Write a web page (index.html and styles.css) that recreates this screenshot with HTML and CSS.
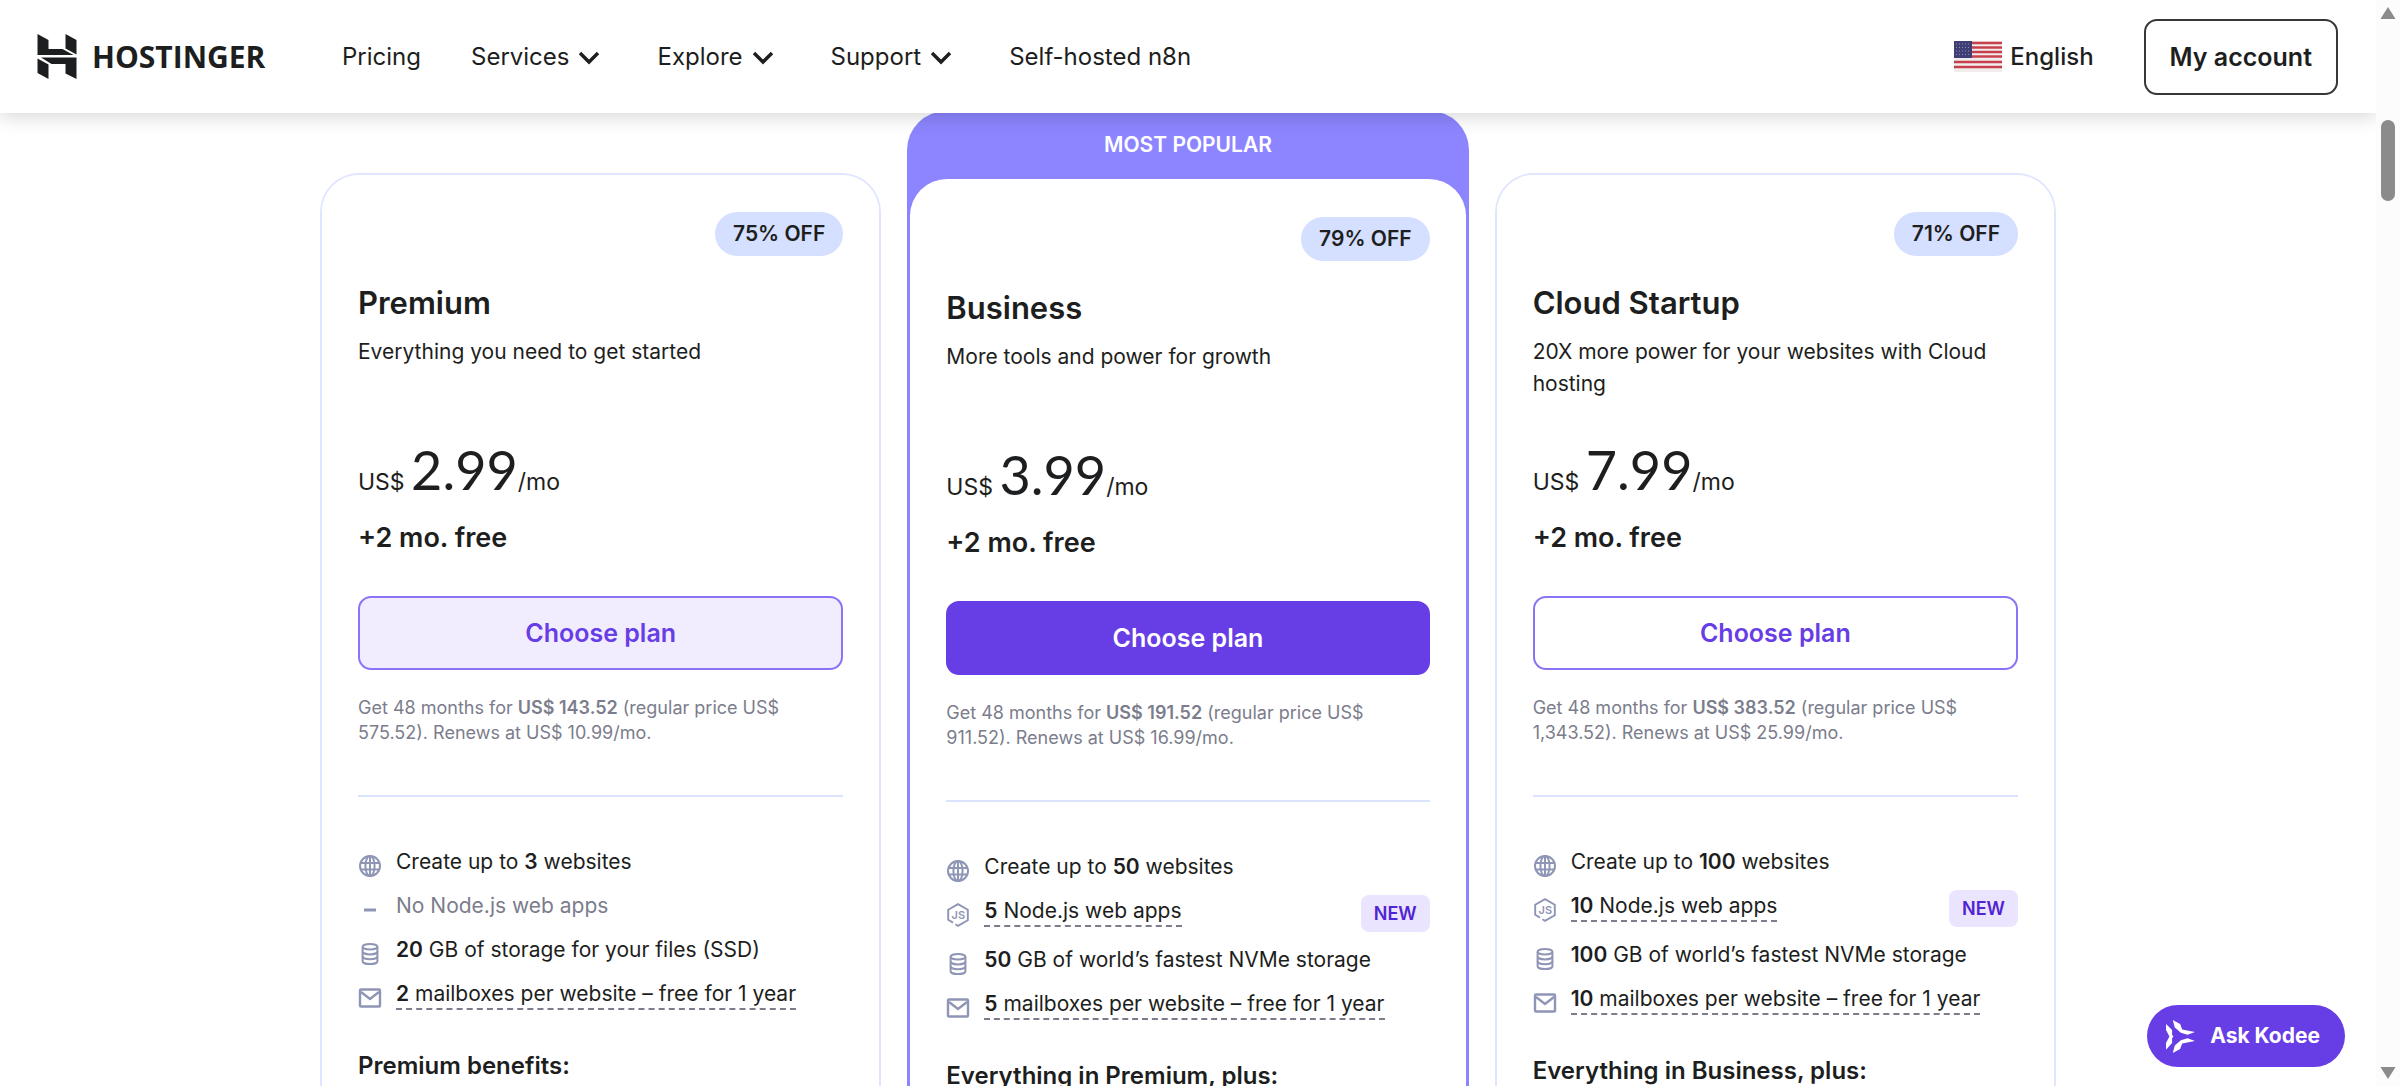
FILE: index.html
```html
<!DOCTYPE html>
<html lang="en">
<head>
  <meta charset="UTF-8">
  <meta name="viewport" content="width=device-width, initial-scale=1">
  <title>Hostinger - Choose your plan</title>
  <link rel="stylesheet" href="styles.css">
</head>
<body>
  <svg class="sprite" aria-hidden="true">
    <symbol id="chevron" viewBox="0 0 24 24">
      <path d="M3 8l9 9 9-9" fill="none" stroke="currentColor" stroke-width="3.4"/>
    </symbol>
    <symbol id="globe" viewBox="0 0 24 24">
      <g fill="none" stroke="currentColor" stroke-width="2">
        <circle cx="12" cy="12" r="10"/>
        <ellipse cx="12" cy="12" rx="4.6" ry="10"/>
        <path d="M12 2v20M2.8 9h18.400M2.8 15.500h18.400"/>
      </g>
    </symbol>
    <symbol id="node" viewBox="0 0 24 24">
      <path d="M7 19.600l-4.800-2.800V6.800L12 1.200l9.800 5.600v10.400L12 22.800l-2.600-1.500" fill="none" stroke="currentColor" stroke-width="1.9"/>
      <text x="5.500" y="16" font-size="11" font-weight="600" fill="currentColor">JS</text>
    </symbol>
    <symbol id="storage" viewBox="0 0 24 24">
      <g fill="none" stroke="currentColor" stroke-width="2">
        <ellipse cx="12" cy="4.8" rx="7.400" ry="2.8"/>
        <path d="M4.6 4.8v14.400c0 1.600 3.300 2.900 7.400 2.900s7.400-1.300 7.400-2.900V4.8"/>
        <path d="M4.6 9.500c0 1.600 3.300 2.900 7.400 2.900s7.400-1.300 7.400-2.900M4.6 14.300c0 1.600 3.300 2.900 7.400 2.900s7.400-1.300 7.400-2.900"/>
      </g>
    </symbol>
    <symbol id="mail" viewBox="0 0 24 24">
      <g fill="none" stroke="currentColor" stroke-width="2.4">
        <rect x="2" y="3.500" width="20" height="17" rx="1"/>
        <path d="M3 6l9 7 9-7"/>
      </g>
    </symbol>
    <symbol id="dash" viewBox="0 0 24 24">
      <path d="M6 12h12" stroke="currentColor" stroke-width="3"/>
    </symbol>
  </svg>

  <div class="window">
    <div class="page">
      <header class="header">
        <a class="logo" href="#">
          <svg viewBox="0 0 39 45" aria-hidden="true">
            <path d="M0 0l11 6v9h14l11 6H0zM28 0l11 6v14.500l-11-6zM3.500 23.500H39V45l-11-5.500V30H14zM0 24.500l11 6V45L0 39z"/>
          </svg>
          <span>HOSTINGER</span>
        </a>
        <nav class="nav">
          <a href="#">Pricing</a>
          <button type="button">Services<svg><use href="#chevron"/></svg></button>
          <button type="button">Explore<svg><use href="#chevron"/></svg></button>
          <button type="button">Support<svg><use href="#chevron"/></svg></button>
          <a href="#">Self-hosted n8n</a>
        </nav>
        <button type="button" class="language">
          <svg class="flag" viewBox="0 0 48 31" aria-hidden="true">
            <rect width="48" height="31" rx="1" fill="#f1eded"/>
            <path d="M0 2h48M0 6.500h48M0 11h48M0 15.500h48M0 21h48M0 26h48" stroke="#c8404c" stroke-width="2.600"/>
            <rect width="18" height="17" fill="#3f3f75"/>
            <path d="M2 3h15M2 6.500h15M2 10h15M2 13.500h15" stroke="#8c8cb4" stroke-width="1" stroke-dasharray="1 2"/>
          </svg>
          English
        </button>
        <a class="account" href="#">My account</a>
      </header>

      <main class="plans">
        <section class="plan">
          <div class="plan-body">
            <span class="discount">75% OFF</span>
            <h2>Premium</h2>
            <p class="desc">Everything you need to get started</p>
            <p class="price">US$ <span>2.99</span>/mo</p>
            <p class="bonus">+2 mo. free</p>
            <button type="button" class="choose soft">Choose plan</button>
            <p class="renewal">Get 48 months for <b>US$ 143.52</b> (regular price US$ 575.52). Renews at US$ 10.99/mo.</p>
            <ul class="features">
              <li><svg><use href="#globe"/></svg><span>Create up to <b>3</b> websites</span></li>
              <li class="off"><svg><use href="#dash"/></svg><span>No Node.js web apps</span></li>
              <li><svg><use href="#storage"/></svg><span><b>20</b> GB of storage for your files (SSD)</span></li>
              <li><svg><use href="#mail"/></svg><span><span class="hint"><b>2</b> mailboxes per website – free for 1 year</span></span></li>
            </ul>
            <h3>Premium benefits:</h3>
          </div>
        </section>

        <section class="plan popular">
          <p class="banner">MOST POPULAR</p>
          <div class="plan-body">
            <span class="discount">79% OFF</span>
            <h2>Business</h2>
            <p class="desc">More tools and power for growth</p>
            <p class="price">US$ <span>3.99</span>/mo</p>
            <p class="bonus">+2 mo. free</p>
            <button type="button" class="choose solid">Choose plan</button>
            <p class="renewal">Get 48 months for <b>US$ 191.52</b> (regular price US$ 911.52). Renews at US$ 16.99/mo.</p>
            <ul class="features">
              <li><svg><use href="#globe"/></svg><span>Create up to <b>50</b> websites</span></li>
              <li><svg><use href="#node"/></svg><span><span class="hint"><b>5</b> Node.js web apps</span></span><span class="new">NEW</span></li>
              <li><svg><use href="#storage"/></svg><span><b>50</b> GB of world’s fastest NVMe storage</span></li>
              <li><svg><use href="#mail"/></svg><span><span class="hint"><b>5</b> mailboxes per website – free for 1 year</span></span></li>
            </ul>
            <h3>Everything in Premium, plus:</h3>
          </div>
        </section>

        <section class="plan">
          <div class="plan-body">
            <span class="discount">71% OFF</span>
            <h2>Cloud Startup</h2>
            <p class="desc">20X more power for your websites with Cloud hosting</p>
            <p class="price">US$ <span>7.99</span>/mo</p>
            <p class="bonus">+2 mo. free</p>
            <button type="button" class="choose">Choose plan</button>
            <p class="renewal">Get 48 months for <b>US$ 383.52</b> (regular price US$ 1,343.52). Renews at US$ 25.99/mo.</p>
            <ul class="features">
              <li><svg><use href="#globe"/></svg><span>Create up to <b>100</b> websites</span></li>
              <li><svg><use href="#node"/></svg><span><span class="hint"><b>10</b> Node.js web apps</span></span><span class="new">NEW</span></li>
              <li><svg><use href="#storage"/></svg><span><b>100</b> GB of world’s fastest NVMe storage</span></li>
              <li><svg><use href="#mail"/></svg><span><span class="hint"><b>10</b> mailboxes per website – free for 1 year</span></span></li>
            </ul>
            <h3>Everything in Business, plus:</h3>
          </div>
        </section>
      </main>

      <button type="button" class="kodee">
        <svg viewBox="0 0 86 98" aria-hidden="true">
          <path d="M20 0l22 12 6 16 38 8-22 8-20-6-18-16zM20 98l22-12 6-16 38-8-22-8-20 6-18 16zM0 12l18 18v14l4 5-4 5v14L0 88V68l10-19L0 30z" fill="#fff"/>
        </svg>
        Ask Kodee
      </button>
    </div>

    <div class="scrollbar" aria-hidden="true">
      <svg viewBox="0 0 16 12"><path d="M8 0l7 11H1z"/></svg>
      <div class="thumb"></div>
      <svg viewBox="0 0 16 12"><path d="M8 12L1 1h14z"/></svg>
    </div>
  </div>
</body>
</html>
```

FILE: styles.css
```css
* { box-sizing: border-box; }
body {
  margin: 0;
  font-family: Inter, "Liberation Sans", sans-serif;
  font-size: 21px;
  line-height: 32px;
  color: #1d1e20;
  background: #fff;
}
h2, h3, p, ul { margin: 0; padding: 0; }
a { color: inherit; text-decoration: none; }
button { font: inherit; color: inherit; cursor: pointer; }
b { font-weight: 600; }
.sprite { display: none; }

.window { display: flex; height: 100vh; overflow: hidden; }
.page { position: relative; flex: 1; min-width: 0; overflow: hidden; }

/* header */
.header {
  position: relative;
  z-index: 2;
  display: flex;
  align-items: center;
  height: 113px;
  padding: 0 38px 0 37px;
  background: #fff;
  box-shadow: 0 4px 18px rgba(0, 0, 0, 0.16);
}
.logo {
  display: flex;
  align-items: center;
  gap: 15px;
  width: 305px;
  font-family: "Open Sans", sans-serif;
  font-size: 30px;
  font-weight: 700;
}
.logo svg { width: 40px; height: 45px; fill: #1d1e20; }
.nav { display: flex; gap: 50px; flex: 1; font-size: 24px; }
.nav button {
  display: flex;
  align-items: center;
  gap: 8px;
  padding: 0;
  border: 0;
  background: none;
}
.nav svg { width: 24px; height: 24px; margin-right: 6px; }
.language {
  display: flex;
  align-items: center;
  gap: 8px;
  margin-right: 50px;
  padding: 0;
  border: 0;
  background: none;
  font-size: 24px;
  font-weight: 500;
}
.flag { width: 48px; height: 31px; }
.account {
  padding: 20px 24px;
  border: 2px solid #36373a;
  border-radius: 13px;
  font-size: 25px;
  font-weight: 600;
  line-height: 32px;
}

/* plan cards */
.plans {
  display: grid;
  grid-template-columns: repeat(3, 1fr);
  gap: 26px;
  max-width: 1736px;
  margin: 0 auto;
  padding-top: 60px;
}
.plan { border: 2px solid #e0e6ff; border-bottom: 0; border-radius: 39px 39px 0 0; }
.plan-body {
  display: flex;
  flex-direction: column;
  padding: 37px 36px 60px;
  border-radius: 37px 37px 0 0;
  background: #fff;
}
.popular {
  margin-top: -62px;
  padding: 0 3px;
  border: 0;
  background: #8c85ff;
}
.popular .plan-body { padding: 38px 36px 60px; }
.banner {
  padding: 18px 0;
  color: #fff;
  font-weight: 600;
  text-align: center;
}
.discount {
  align-self: flex-end;
  padding: 6px 18px;
  border-radius: 22px;
  background: #d5dfff;
  font-weight: 600;
}
.plan h2 {
  margin: 27px 0 13px;
  font-size: 31px;
  font-weight: 600;
  line-height: 40px;
}
.desc { min-height: 64px; }
.price {
  margin-top: 40px;
  font-size: 23px;
  line-height: 60px;
}
.price span { font-family: Lato, sans-serif; font-size: 54px; }
.bonus {
  margin: 8px 0 40px;
  font-size: 27px;
  font-weight: 600;
  line-height: 36px;
}
.choose {
  height: 74px;
  border: 2px solid #8c72f5;
  border-radius: 13px;
  background: #fff;
  color: #673de6;
  font-size: 25px;
  font-weight: 600;
}
.soft { background: #f1edff; }
.solid { border-color: #673de6; background: #673de6; color: #fff; }
.renewal {
  margin: 25px 0 50px;
  font-size: 18px;
  line-height: 25px;
  color: #7b7d8c;
}
.features {
  display: grid;
  gap: 12px;
  padding-top: 49px;
  border-top: 2px solid #dbe3ff;
  list-style: none;
}
.features li { display: flex; align-items: flex-start; }
.features svg {
  flex: none;
  width: 24px;
  height: 24px;
  margin: 8px 14px 0 0;
  color: #8f95b5;
}
.off { color: #7b7d8c; }
.hint { padding-bottom: 2px; border-bottom: 2px dashed #7b7d8c; }
.new {
  margin-left: auto;
  padding: 0 13px;
  border-radius: 8px;
  background: #ebe4ff;
  color: #5025d1;
  font-size: 18px;
  font-weight: 600;
  line-height: 37px;
}
.plan h3 {
  margin-top: 40px;
  font-size: 24px;
  font-weight: 600;
}

/* chat button floats above the page */
.kodee {
  position: absolute;
  right: 31px;
  bottom: 19px;
  z-index: 3;
  display: flex;
  align-items: center;
  gap: 15px;
  height: 62px;
  padding: 0 25px 0 19px;
  border: 0;
  border-radius: 31px;
  background: #673de6;
  color: #fff;
  font-weight: 700;
}
.kodee svg { width: 29px; height: 33px; }

.scrollbar {
  display: flex;
  flex-direction: column;
  align-items: center;
  width: 24px;
  padding: 7px 0;
  background: #fcfcfc;
}
.scrollbar svg { width: 18px; height: 13px; fill: #8b8b8b; }
.scrollbar svg:last-child { margin-top: auto; }
.thumb {
  width: 14px;
  height: 81px;
  margin-top: 100px;
  border-radius: 7px;
  background: #8b8b8b;
}
```
